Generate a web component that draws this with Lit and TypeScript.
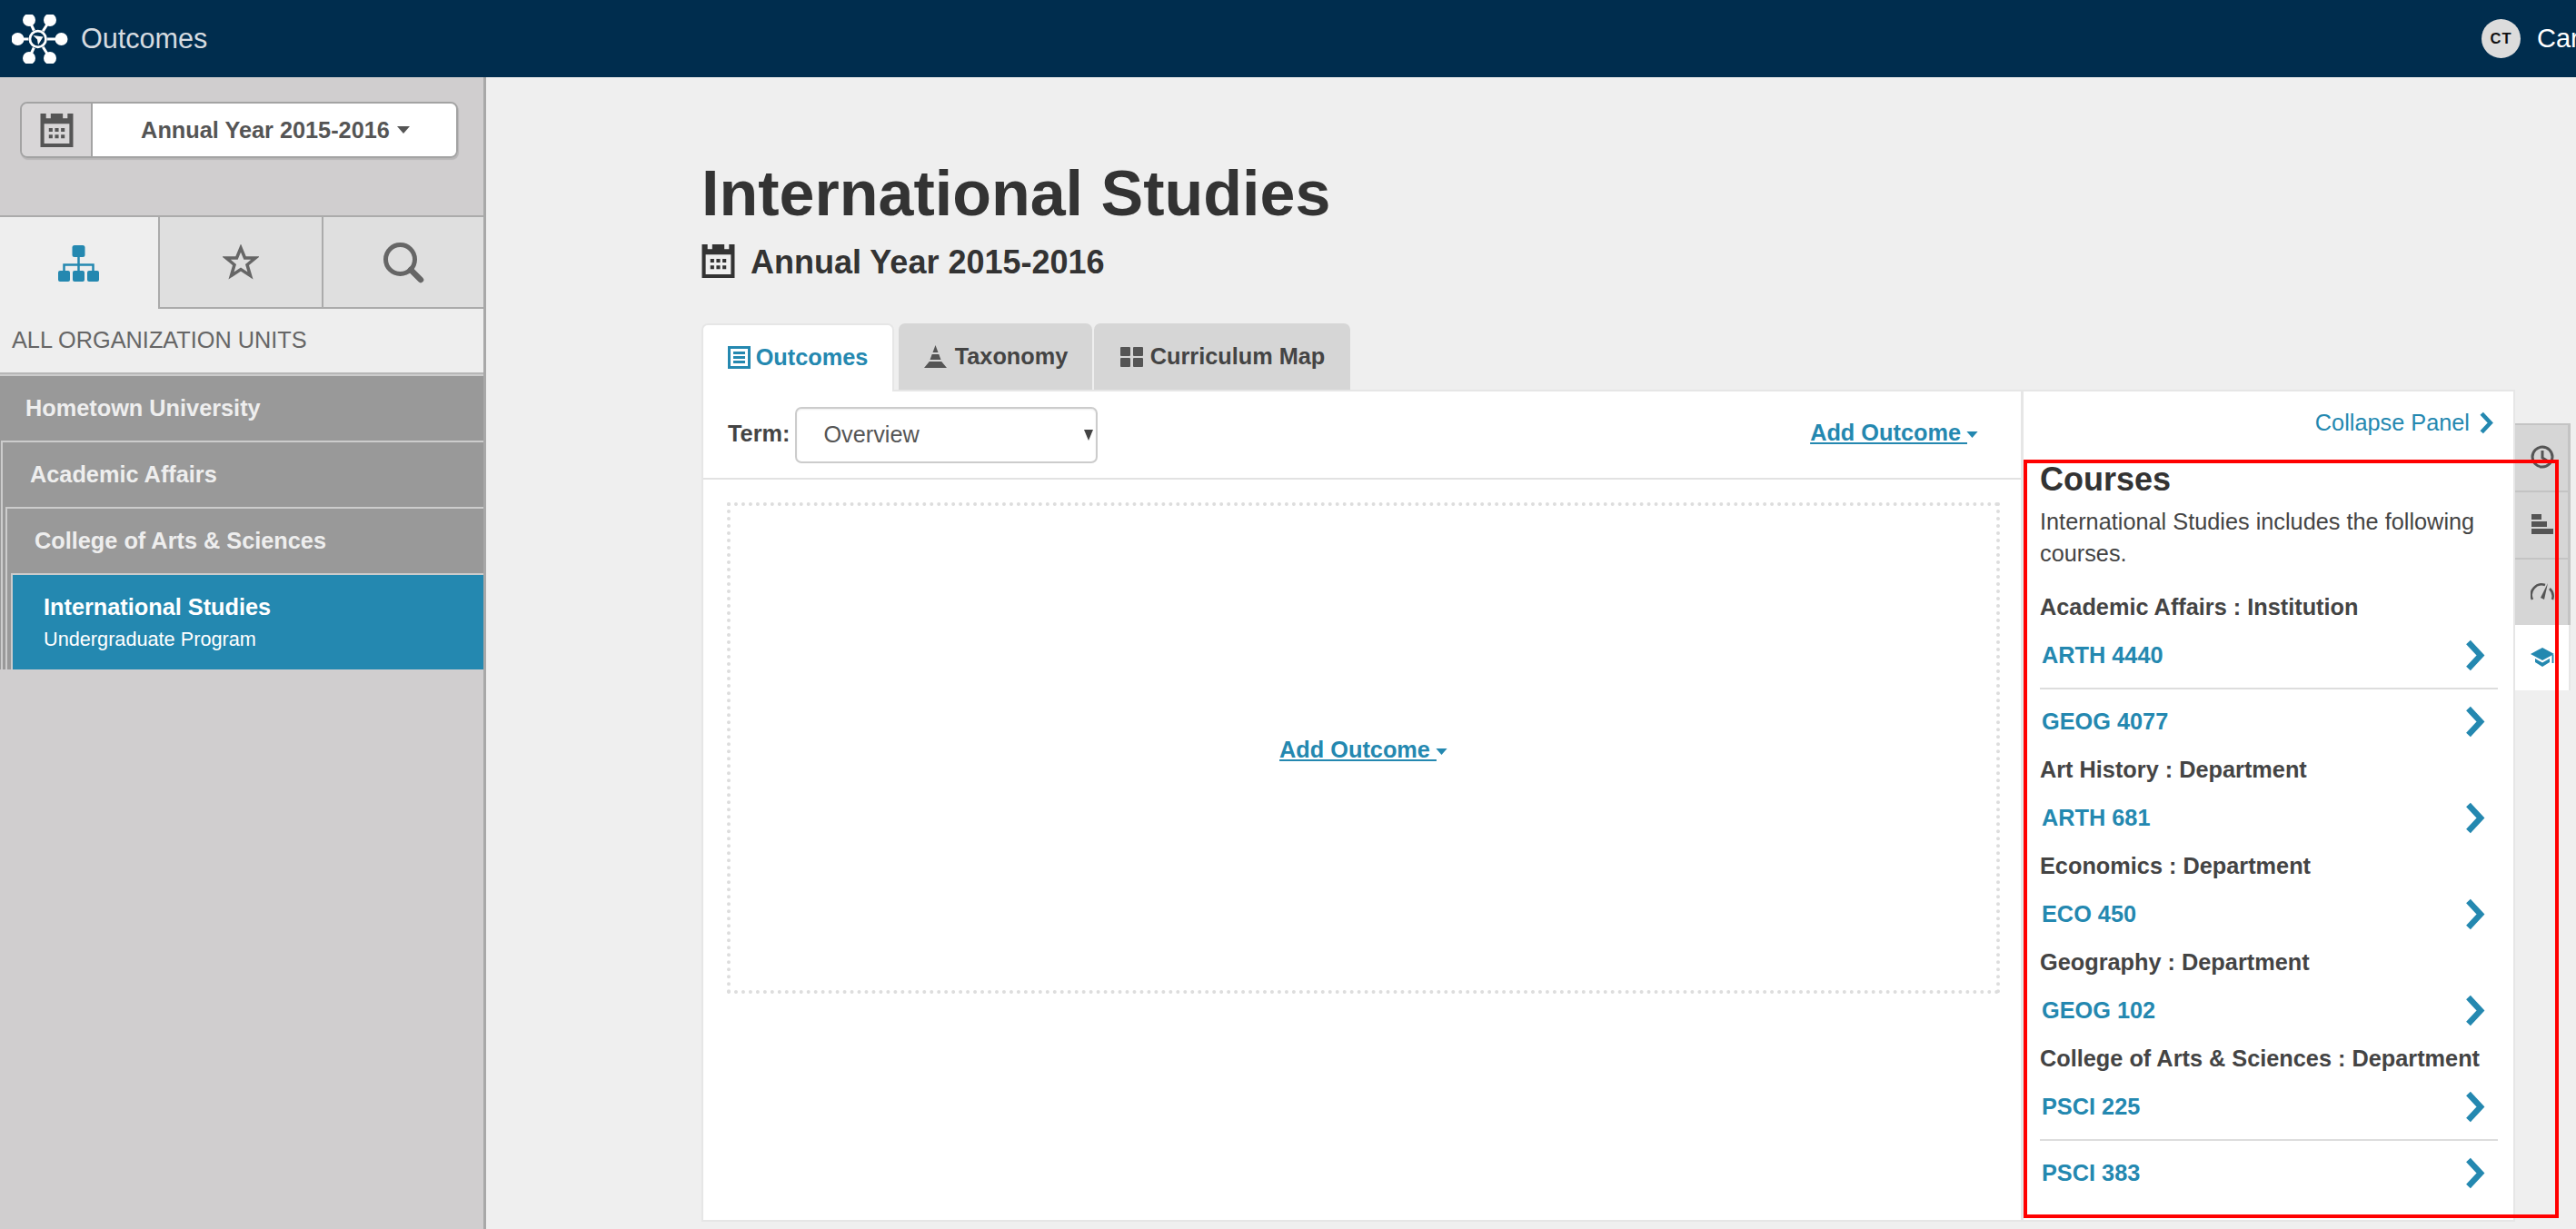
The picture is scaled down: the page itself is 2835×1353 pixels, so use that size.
import { LitElement, html, css } from "lit";
import { customElement } from "lit/decorators.js";

const calendar = (w: number, h: number) => html`<svg class="cal" width=${w} height=${h} viewBox="0 0 35 36"><path fill-rule="evenodd" d="M0 0H6V5H11V0H24V5H29V0H35V36H0ZM4 11V32H31V11ZM9 15.500H13V19.500H9ZM15.500 15.500H19.500V19.500H15.500ZM22 15.500H26V19.500H22ZM9 22.500H13V26.500H9ZM15.500 22.500H19.500V26.500H15.500ZM22 22.500H26V26.500H22Z" fill="currentColor"/></svg>`;

const caret = html`<svg class="caret" viewBox="0 0 14 8"><path d="M0 0H14L7 8Z" fill="currentColor"/></svg>`;

const chevron = html`<svg class="chev" viewBox="0 0 24 35"><path d="M4.500 3L18 17.500L4.500 32" fill="none" stroke="currentColor" stroke-width="6.500"/></svg>`;

const logo = html`<svg class="logo" width="62" height="54" viewBox="13 13 62 54">
  <g stroke="#fff" stroke-width="3" fill="none">
    <path d="M32 19L41.700 40L55 19M19 40H68M32 61L41.700 40L55 61"/>
  </g>
  <circle cx="41.700" cy="40" r="10.500" fill="#002d4e"/>
  <g fill="#fff">
    <circle cx="32" cy="19" r="7"/><circle cx="55" cy="19" r="7"/>
    <circle cx="19.500" cy="40" r="7"/><circle cx="67.500" cy="40" r="7"/>
    <circle cx="32" cy="61" r="7"/><circle cx="55" cy="61" r="7"/>
  </g>
  <circle cx="41.700" cy="40" r="8.800" fill="none" stroke="#fff" stroke-width="2.800"/>
  <path d="M36.500 36L47.500 37.500L42 46.500L41 40.500Z" fill="#fff"/>
</svg>`;

const orgIcon = html`<svg width="46" height="40" viewBox="0 0 46 40"><g fill="currentColor"><rect x="15.500" y="0" width="14" height="13" rx="2.500"/><rect x="0" y="28" width="13" height="12" rx="2"/><rect x="16" y="28" width="13" height="12" rx="2"/><rect x="32" y="28" width="13" height="12" rx="2"/></g><path d="M22.500 12V28M6.500 29V21.500H38.500V29" fill="none" stroke="currentColor" stroke-width="2.500"/></svg>`;

const starIcon = html`<svg width="40" height="39" viewBox="0 0 40 39"><path d="M20 4L24.500 15H36L27 22.500L30.500 34.500L20 27.500L9.500 34.500L13 22.500L4 15H15.500Z" fill="none" stroke="currentColor" stroke-width="3.500"/></svg>`;

const searchIcon = html`<svg width="46" height="46" viewBox="0 0 46 46"><circle cx="19.500" cy="19.500" r="16" fill="none" stroke="currentColor" stroke-width="5"/><path d="M31 31L42 42" stroke="currentColor" stroke-width="6.500" stroke-linecap="round"/></svg>`;

const docIcon = html`<svg width="25" height="25" viewBox="0 0 25 25"><path fill-rule="evenodd" d="M0 0H25V25H0ZM3 3V22H22V3ZM6 6H19V9H6ZM6 11H19V14H6ZM6 16H19V19H6Z" fill="currentColor"/></svg>`;

const pyramidIcon = html`<svg width="27" height="25" viewBox="0 0 25 25"><path d="M12.500 0L15.500 8H9.500ZM8.700 10H16.300L18.500 16H6.500ZM5.800 18H19.200L25 25H0Z" fill="currentColor"/></svg>`;

const gridIcon = html`<svg width="25" height="22" viewBox="0 0 25 22"><g fill="currentColor"><rect width="11" height="10" rx="1"/><rect x="14" width="11" height="10" rx="1"/><rect y="12" width="11" height="10" rx="1"/><rect x="14" y="12" width="11" height="10" rx="1"/></g></svg>`;

const clockIcon = html`<svg width="26" height="26" viewBox="0 0 26 26"><circle cx="13" cy="13" r="11" fill="none" stroke="currentColor" stroke-width="3"/><path d="M13 6V14L18 17" fill="none" stroke="currentColor" stroke-width="3"/></svg>`;

const barsIcon = html`<svg width="24" height="22" viewBox="0 0 24 22"><g fill="currentColor"><rect x="0" y="0" width="11" height="6"/><rect x="0" y="8" width="17" height="6"/><rect x="0" y="16" width="24" height="6"/></g></svg>`;

const gaugeIcon = html`<svg width="26" height="20" viewBox="0 0 26 20"><path d="M2 19A11.500 11.500 0 0 1 16 3" fill="none" stroke="currentColor" stroke-width="2.500"/><path d="M21 7A11.500 11.500 0 0 1 24 19" fill="none" stroke="currentColor" stroke-width="2.500"/><path d="M19 1L15 19L11 17Z" fill="currentColor"/></svg>`;

const capIcon = html`<svg width="27" height="24" viewBox="0 0 27 24"><path d="M13 1L26 8L13 15L0 8Z" fill="currentColor"/><path d="M5 13L13 17.500L21 13V17L13 22L5 17Z" fill="currentColor"/><path d="M24.500 9V18" stroke="currentColor" stroke-width="1.800"/></svg>`;

const groups: { head?: string; course: string; rule?: boolean }[] = [
  { head: "Academic Affairs : Institution", course: "ARTH 4440", rule: true },
  { course: "GEOG 4077" },
  { head: "Art History : Department", course: "ARTH 681" },
  { head: "Economics : Department", course: "ECO 450" },
  { head: "Geography : Department", course: "GEOG 102" },
  { head: "College of Arts & Sciences : Department", course: "PSCI 225", rule: true },
  { course: "PSCI 383" },
];

@customElement("app-root")
export class AppRoot extends LitElement {
  static styles = css`
    :host {
      display: block;
      position: relative;
      width: 2835px;
      height: 1353px;
      overflow: hidden;
      background: #efefef;
      font-family: "Liberation Sans", Arial, sans-serif;
      font-size: 25.3px;
      color: #333;
    }
    svg { display: block; flex: none; }
    .topbar {
      height: 85px;
      background: #002d4e;
      display: flex;
      align-items: center;
      padding-left: 13px;
    }
    .brand { margin-left: 14px; font-size: 30.6px; color: #d5dbe0; }
    .user { margin-left: auto; display: flex; align-items: center; gap: 18px; width: 104px; overflow: hidden; color: #fff; font-size: 29px; }
    .avatar {
      width: 43px; height: 43px; flex: none; border-radius: 50%;
      background: #dcdcdc; color: #111; font-size: 16.5px; font-weight: 700;
      letter-spacing: 1px; display: flex; align-items: center; justify-content: center;
    }
    .body { display: flex; height: 1268px; }

    .side {
      width: 535px; flex: none; box-sizing: border-box;
      background: #d0cecf; border-right: 3px solid #a8a8a8;
    }
    .picker-wrap { height: 154px; box-sizing: border-box; padding: 27px 0 0 22px; border-bottom: 2px solid #ababab; }
    .picker {
      width: 482px; height: 62px; box-sizing: border-box; display: flex;
      border: 2px solid #a3a3a3; border-radius: 8px; overflow: hidden;
      box-shadow: 1px 2px 1px rgba(0,0,0,.12);
    }
    .picker-ic { width: 76px; flex: none; border-right: 2px solid #a3a3a3; color: #555; display: flex; align-items: center; justify-content: center; background: #d8d6d7; }
    .picker-val { flex: 1; background: #fff; color: #555; font-weight: 700; display: flex; align-items: center; justify-content: center; gap: 8px; padding-left: 2px; }
    .picker-val .caret { width: 14px; height: 8px; }
    .stabs { display: flex; height: 101px; }
    .stab {
      flex: 1; display: flex; align-items: center; justify-content: center;
      background: #dfdfdf; color: #666; border-bottom: 2px solid #ababab; border-left: 2px solid #ababab; box-sizing: border-box;
    }
    .stab.on { background: #eee; color: #2488b0; border-bottom: 0; border-left: 0; flex: none; width: 174px; }
    .stab.mid { flex: none; width: 180px; }
    .all {
      height: 72px; background: #eee; color: #666; font-size: 25.3px;
      padding: 20px 0 0 13px; box-sizing: border-box; border-bottom: 2px solid #b6b6b6;
    }
    .node { background: #999; }
    .node .node { border-left: 2px solid #ccc; margin-left: 1px; }
    .node .node .node { margin-left: 3px; }
    .node .node .node .node { margin-left: 4px; }
    .lbl {
      height: 73px; box-sizing: border-box; padding-left: 28px; display: flex; align-items: center;
      color: #eee; font-weight: 700; border-top: 2px solid #ccc;
    }
    .node .node > .lbl { padding-left: 30px; }
    .cur {
      height: 106px; box-sizing: border-box; background: #2488b0; color: #fff; padding: 0 0 0 34px;
      border-top: 2px solid #ccc; display: flex; flex-direction: column; justify-content: center;
    }
    .cur b { font-size: 25.3px; line-height: 36px; }
    .cur span { font-size: 21.7px; line-height: 35px; }

    .main { flex: 1; display: flex; align-items: flex-start; padding-left: 237px; }
    .col { width: 1996px; flex: none; }
    h1 { margin: 0; padding-top: 92px; font-size: 70px; line-height: 72px; font-weight: 700; color: #333; }
    h2 { margin: 0; padding-top: 20px; height: 69px; box-sizing: border-box; display: flex; align-items: flex-start; gap: 17px; font-size: 36px; line-height: 40px; font-weight: 700; color: #333; }
    .tabs { display: flex; height: 73px; margin-top: 38px; }
    .tab {
      box-sizing: border-box; height: 73px; display: flex; align-items: center; justify-content: center; gap: 8px;
      background: #d6d6d6; color: #444; font-weight: 700; border-radius: 7px 7px 0 0;
    }
    .tab svg { color: #555; }
    .tab.on { width: 212px; gap: 6px; background: #fff; color: #2488b0; border: 2px solid #e6e6e6; border-bottom: 0; height: 75px; padding-bottom: 3px; position: relative; z-index: 1; }
    .tab.on svg { color: #2488b0; }
    .tab.tax { width: 213px; margin-left: 5px; }
    .tab.map { width: 282px; margin-left: 2px; padding-left: 1px; }
    .panel { display: flex; height: 916px; box-sizing: border-box; background: #fff; border: 2px solid #e6e6e6; }
    .left { width: 1450px; flex: none; }
    .tool {
      height: 97px; box-sizing: border-box; border-bottom: 2px solid #e2e2e2; display: flex; align-items: center;
      padding: 0 47px 0 27px; gap: 6px;
    }
    .term { font-weight: 700; color: #444; margin-top: -2px; }
    .sel {
      width: 333px; height: 62px; box-sizing: border-box; border: 2px solid #ccc; border-radius: 7px; margin-top: 1px;
      display: flex; align-items: center; justify-content: space-between; padding: 0 3px 0 29px; color: #555;
      box-shadow: inset 0 1px 2px rgba(0,0,0,.08);
    }
    .sel span { margin-top: -1px; }
    .sel svg { width: 10px; height: 12px; color: #444; }
    a { color: #2488b0; text-decoration: none; }
    .add { font-weight: 700; text-decoration: underline; display: inline-flex; align-items: center; white-space: pre; }
    .add .caret { width: 13px; height: 7px; margin-left: -1px; margin-top: 3px; }
    .tool .add { margin-left: auto; margin-top: -4px; }
    .drop {
      margin: 25px 0 0 26px; width: 1401px; height: 541px; box-sizing: border-box; padding-top: 4px;
      border: 4px dotted #ddd; display: flex; align-items: center; justify-content: center;
    }
    .right { flex: 1; border-left: 3px solid #e6e6e6; padding: 0 17px 0 18px; min-width: 0; }
    .collapse { height: 76px; display: flex; align-items: center; justify-content: flex-end; gap: 10px; padding: 0 4px 8px 0; box-sizing: border-box; color: #2488b0; }
    .collapse .chev { width: 17px; height: 25px; }
    h3 { margin: 0; font-size: 36px; line-height: 40px; font-weight: 700; color: #333; padding-top: 1px; }
    .desc { margin: 9px 0 0; line-height: 34.5px; color: #444; }
    .list { margin-top: 16px; }
    .head { height: 53px; display: flex; align-items: center; color: #444; font-weight: 700; white-space: nowrap; }
    .course { height: 53px; display: flex; align-items: center; justify-content: space-between; padding: 0 13px 0 2px; color: #2488b0; font-weight: 700; }
    .course .chev { width: 24px; height: 35px; }
    hr { margin: 9px 0; border: 0; height: 2px; background: #ddd; }

    .rail { width: 61px; flex: none; margin-top: 381px; }
    .r { height: 74px; box-sizing: border-box; display: flex; align-items: center; justify-content: center; padding: 0 0 3px 2px; background: #d6d6d6; border-top: 2px solid #c4c4c4; border-right: 3px solid #c4c4c4; color: #555; }
    .r.on { background: #fff; color: #2488b0; height: 72px; border: 0; border-right: 2px solid #e6e6e6; padding-bottom: 0; }
    .mark { position: absolute; left: 2227px; top: 506px; width: 589px; height: 835px; box-sizing: border-box; border: 4px solid #f00; pointer-events: none; }
  `;

  render() {
    return html`
      <div class="topbar">
        ${logo}
        <div class="brand">Outcomes</div>
        <div class="user"><div class="avatar">CT</div><span>Car</span></div>
      </div>
      <div class="body">
        <aside class="side">
          <div class="picker-wrap">
            <div class="picker">
              <div class="picker-ic">${calendar(37, 37)}</div>
              <div class="picker-val">Annual Year 2015-2016 ${caret}</div>
            </div>
          </div>
          <div class="stabs">
            <div class="stab on">${orgIcon}</div>
            <div class="stab mid">${starIcon}</div>
            <div class="stab">${searchIcon}</div>
          </div>
          <div class="all">ALL ORGANIZATION UNITS</div>
          <div class="node">
            <div class="lbl">Hometown University</div>
            <div class="node">
              <div class="lbl">Academic Affairs</div>
              <div class="node">
                <div class="lbl">College of Arts &amp; Sciences</div>
                <div class="node">
                  <div class="cur"><b>International Studies</b><span>Undergraduate Program</span></div>
                </div>
              </div>
            </div>
          </div>
        </aside>
        <main class="main">
          <div class="col">
            <h1>International Studies</h1>
            <h2>${calendar(37, 37)}<span>Annual Year 2015-2016</span></h2>
            <div class="tabs">
              <div class="tab on">${docIcon}Outcomes</div>
              <div class="tab tax">${pyramidIcon}Taxonomy</div>
              <div class="tab map">${gridIcon}Curriculum Map</div>
            </div>
            <div class="panel">
              <section class="left">
                <div class="tool">
                  <span class="term">Term:</span>
                  <div class="sel"><span>Overview</span><svg viewBox="0 0 10 12"><path d="M0 0H10L5 12Z" fill="currentColor"/></svg></div>
                  <a class="add">Add Outcome ${caret}</a>
                </div>
                <div class="drop"><a class="add">Add Outcome ${caret}</a></div>
              </section>
              <section class="right">
                <div class="collapse"><span>Collapse Panel</span>${chevron}</div>
                <h3>Courses</h3>
                <p class="desc">International Studies includes the following courses.</p>
                <div class="list">
                  ${groups.map(
                    (g) => html`
                      ${g.head ? html`<div class="head">${g.head}</div>` : ""}
                      <a class="course"><span>${g.course}</span>${chevron}</a>
                      ${g.rule ? html`<hr />` : ""}
                    `
                  )}
                </div>
              </section>
            </div>
          </div>
          <nav class="rail">
            <div class="r">${clockIcon}</div>
            <div class="r">${barsIcon}</div>
            <div class="r">${gaugeIcon}</div>
            <div class="r on">${capIcon}</div>
          </nav>
        </main>
      </div>
      <div class="mark"></div>
    `;
  }
}
